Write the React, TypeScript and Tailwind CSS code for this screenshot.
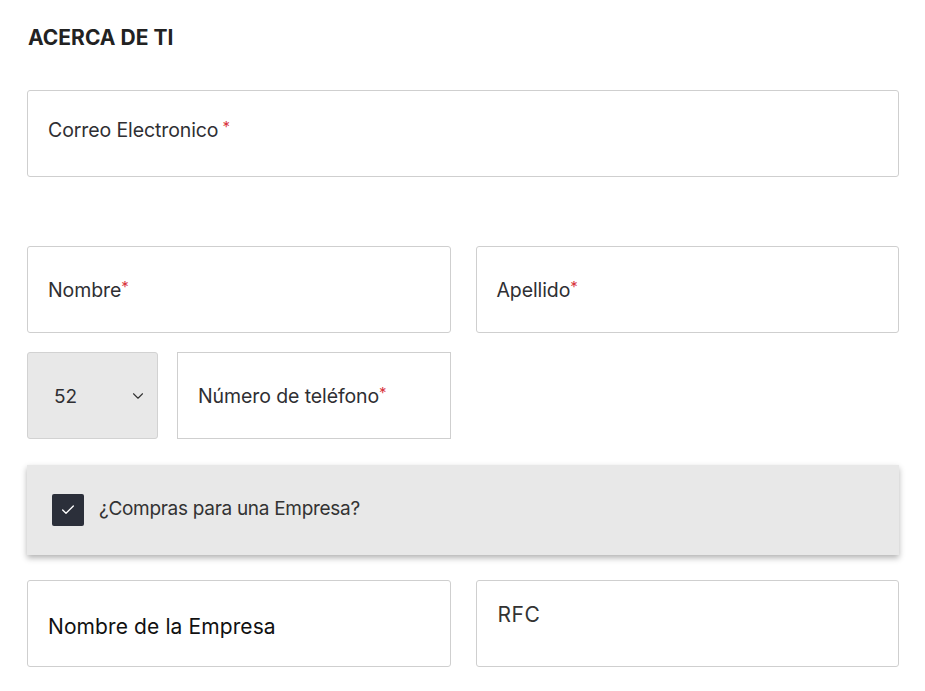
import { ChevronDown, Check } from "lucide-react";

function Field({
  label,
  required,
  gap,
  className,
  textClass,
}: {
  label: string;
  required?: boolean;
  gap?: boolean;
  className?: string;
  textClass?: string;
}) {
  return (
    <div
      className={`h-[87px] border border-[#cfcfcf] rounded-[3px] bg-white flex items-center px-5 ${className ?? ""}`}
    >
      <span className={`text-[19.5px] text-[#2f2f33] tracking-[-0.1px] ${textClass ?? "mt-[3px]"}`}>
        {label}
        {required && (
          <span className={`text-[#d9363e] text-[15px] align-top ${gap ? "ml-1" : ""}`}>*</span>
        )}
      </span>
    </div>
  );
}

export default function App() {
  return (
    <div
      className="w-[925px] h-[691px] bg-white pl-[27px] pr-[26px] pt-[26px]"
      style={{ fontFamily: "Inter, 'Liberation Sans', sans-serif" }}
    >
      <h2 className="text-[21px] font-bold text-[#222] tracking-normal leading-[24px] pl-px">
        ACERCA DE TI
      </h2>

      <Field
        label="Correo Electronico"
        required
        gap
        className="mt-[40px]"
        textClass="-mt-[6px]"
      />

      <div className="grid grid-cols-2 gap-[25px] mt-[69px]">
        <Field label="Nombre" required />
        <Field label="Apellido" required />
      </div>

      <div className="grid grid-cols-2 gap-[25px] mt-[19px]">
        <div className="flex gap-[19px]">
          <div className="w-[131px] h-[87px] bg-[#e8e8e8] border border-[#d2d2d2] rounded-[3px] flex items-center justify-between pl-[26px] pr-[10px] shrink-0">
            <span className="text-[19px] text-[#2f2f33] mt-[3px]">52</span>
            <ChevronDown size={18} strokeWidth={1.5} className="text-[#333]" />
          </div>
          <Field label="Número de teléfono" required className="flex-1 rounded-none" />
        </div>
        <div />
      </div>

      <div className="mt-[26px] h-[90px] bg-[#e8e8e8] shadow-[0_3px_6px_rgba(0,0,0,0.3)] flex items-center pl-[25px]">
        <div className="w-[32px] h-[32px] bg-[#2b2f3a] rounded-[2px] flex items-center justify-center">
          <Check size={16} strokeWidth={2} className="text-white" />
        </div>
        <span className="ml-[15px] text-[19px] text-[#333] tracking-[-0.3px] -mt-[1px]">
          ¿Compras para una Empresa?
        </span>
      </div>

      <div className="grid grid-cols-2 gap-[25px] mt-[25px]">
        <div className="h-[87px] border border-[#cfcfcf] rounded-[3px] flex items-center px-5 pt-[6px]">
          <span className="text-[21px] text-[#111] tracking-[0.1px]">Nombre de la Empresa</span>
        </div>
        <div className="h-[87px] border border-[#cfcfcf] rounded-[3px] px-[21px] pt-[18px]">
          <span className="text-[21px] text-[#333] tracking-[0.5px]">RFC</span>
        </div>
      </div>
    </div>
  );
}
